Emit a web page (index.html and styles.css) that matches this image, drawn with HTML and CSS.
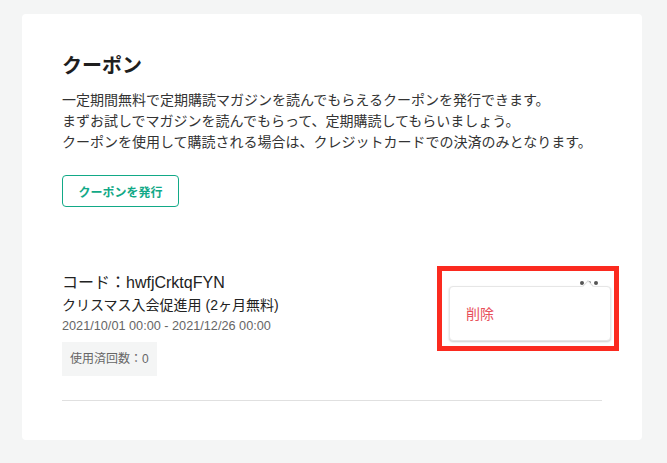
FILE: index.html
```html
<!DOCTYPE html>
<html lang="ja">
<head>
    <meta charset="UTF-8">
    <meta name="viewport" content="width=device-width, initial-scale=1.0">
    <title>クーポン</title>
    <link rel="stylesheet" href="styles.css">
</head>
<body>

<div class="card">
    <h1 class="title">クーポン</h1>
    <p class="desc">
        一定期間無料で定期購読マガジンを読んでもらえるクーポンを発行できます。<br>
        まずお試しでマガジンを読んでもらって、定期購読してもらいましょう。<br>
        クーポンを使用して購読される場合は、クレジットカードでの決済のみとなります。
    </p>
    <button class="issue-button">クーポンを発行</button>

    <div class="coupon">
        <div class="coupon-code">コード：hwfjCrktqFYN</div>
        <div class="coupon-name">クリスマス入会促進用 (2ヶ月無料)</div>
        <div class="coupon-date">2021/10/01 00:00 - 2021/12/26 00:00</div>
        <div class="coupon-count">使用済回数：0</div>

        <div class="more-button">
            <span class="dot"></span><span class="dot"></span><span class="dot"></span>
        </div>
        <div class="highlight"></div>
        <div class="menu">
            <span class="menu-caret"></span>
            <a class="menu-item">削除</a>
        </div>
    </div>
</div>

</body>
</html>
```

FILE: styles.css
```css
body {
    margin: 0;
    padding: 14px 25px 23px 22px;
    background-color: #f4f5f5;
    font-family: "Liberation Sans", "Noto Sans CJK JP", sans-serif;
    color: #333;
}

.card {
    width: 620px;
    height: 426px;
    box-sizing: border-box;
    background-color: #fff;
    border-radius: 4px;
    padding: 38px 40px 0 40px;
}

.title {
    margin: 0;
    font-size: 20px;
    line-height: 28px;
    font-weight: bold;
    color: #1e1e1e;
}

.desc {
    margin: 10px 0 0 0;
    font-size: 14px;
    line-height: 21px;
    color: #333;
}

.issue-button {
    margin-top: 22px;
    width: 117px;
    height: 32px;
    background-color: #fff;
    border: 1px solid #12a987;
    border-radius: 4px;
    color: #12a987;
    font-family: inherit;
    font-size: 12px;
    font-weight: bold;
    padding: 0;
}

.coupon {
    position: relative;
    margin-top: 64px;
    padding-bottom: 24px;
    border-bottom: 1px solid #e0e0e0;
}

.coupon-code {
    font-size: 16px;
    line-height: 24px;
    color: #222;
}

.coupon-name {
    font-size: 14px;
    line-height: 21px;
    color: #222;
}

.coupon-date {
    font-size: 12.7px;
    line-height: 20px;
    color: #666;
}

.coupon-count {
    display: inline-block;
    margin-top: 6px;
    padding: 0 8px;
    height: 34px;
    line-height: 34px;
    background-color: #f4f5f5;
    font-size: 12px;
    color: #666;
}

.more-button {
    position: absolute;
    top: 10px;
    left: 518px;
    display: flex;
    gap: 3px;
}

.dot {
    width: 4px;
    height: 4px;
    border-radius: 50%;
    background-color: #555;
}

.highlight {
    position: absolute;
    left: 375px;
    top: -5px;
    width: 182px;
    height: 85px;
    box-sizing: border-box;
    border: 5px solid #fb2a1f;
}

.menu {
    position: absolute;
    left: 387px;
    top: 15px;
    width: 162px;
    height: 55px;
    box-sizing: border-box;
    background-color: #fff;
    border: 1px solid #e6e6e6;
    border-radius: 4px;
    box-shadow: 0 1px 2px rgba(0, 0, 0, 0.2);
    display: flex;
    align-items: center;
    padding: 0 0 2px 16px;
}

.menu-caret {
    position: absolute;
    top: -5px;
    left: 134px;
    width: 7px;
    height: 7px;
    background-color: #fff;
    border-top: 1px solid #ddd;
    border-left: 1px solid #ddd;
    transform: rotate(45deg);
}

.menu-item {
    font-size: 14px;
    color: #e8505b;
}
```
